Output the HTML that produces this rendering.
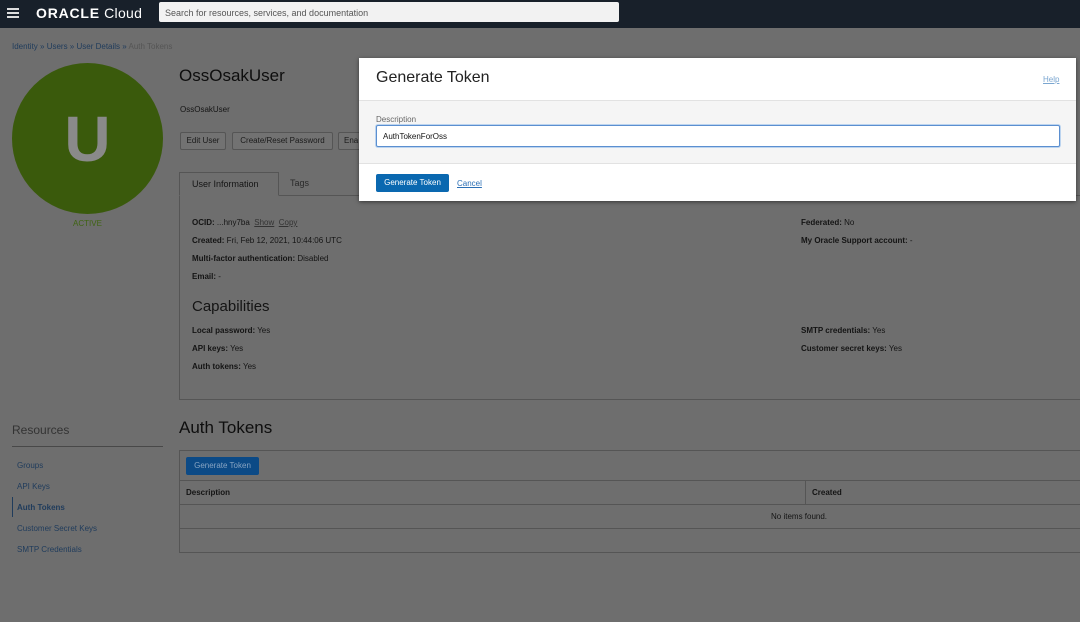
<!DOCTYPE html>
<html><head><meta charset="utf-8"><style>
*{margin:0;padding:0;box-sizing:border-box}
body{width:1080px;height:622px;background:#6e6e6e;font-family:"Liberation Sans",sans-serif;position:relative;overflow:hidden;color:#141414}
.a{position:absolute;white-space:nowrap}
.s{font-size:8px}
b{font-weight:bold}
.ln{color:#203c5c}
.btn{position:absolute;border:1px solid #555;background:#727272;font-size:8px;color:#1a1a1a;text-align:center;line-height:16px;border-radius:2px}
</style></head><body>
<div class="a" style="left:0;top:0;width:1080px;height:28px;background:#18202a"></div>
<div class="a" style="left:7px;top:8px;width:12px;height:1.5px;background:#ddd;box-shadow:0 4px 0 #ddd,0 8px 0 #ddd"></div>
<div class="a" style="left:36px;top:5px;font-size:14px;color:#fff;letter-spacing:0.3px"><b style="font-weight:bold;letter-spacing:0.8px">ORACLE</b> <span style="font-weight:normal">Cloud</span></div>
<div class="a" style="left:159px;top:2px;width:460px;height:20px;background:#f2f2f2;border-radius:2px;font-size:9px;color:#555;padding:6px 0 0 6px">Search for resources, services, and documentation</div>

<div class="a ln" style="left:12px;top:42px;font-size:8px">Identity » Users » User Details » <span style="color:#555">Auth Tokens</span></div>
<div class="a" style="left:12px;top:63px;width:151px;height:151px;border-radius:50%;background:#3a5a0c"></div>
<div class="a" style="left:12px;top:104px;width:151px;text-align:center;font-size:64px;font-weight:bold;color:#8a8a8a;line-height:70px">U</div>
<div class="a" style="left:12px;top:219px;width:151px;text-align:center;font-size:8px;color:#3f6412">ACTIVE</div>

<div class="a" style="left:179px;top:66px;font-size:17px;color:#0e0e0e">OssOsakUser</div>
<div class="a s" style="left:180px;top:105px">OssOsakUser</div>
<div class="btn" style="left:180px;top:132px;width:46px;height:18px">Edit User</div>
<div class="btn" style="left:232px;top:132px;width:101px;height:18px">Create/Reset Password</div>
<div class="btn" style="left:338px;top:132px;width:30px;height:18px;text-align:left;padding-left:5px">Ena</div>

<div class="a" style="left:179px;top:195px;width:902px;height:205px;border:1px solid #555;border-right:none"></div>
<div class="a" style="left:179px;top:172px;width:100px;height:24px;border:1px solid #555;border-bottom:1px solid #6e6e6e;font-size:9px;padding:6px 0 0 12px">User Information</div>
<div class="a" style="left:290px;top:178px;font-size:9px;color:#2a2a2a">Tags</div>
<div class="a s" style="left:192px;top:218px"><b>OCID:</b> ...hny7ba &nbsp;<u style="color:#333">Show</u> &nbsp;<u style="color:#333">Copy</u></div>
<div class="a s" style="left:192px;top:236px"><b>Created:</b> Fri, Feb 12, 2021, 10:44:06 UTC</div>
<div class="a s" style="left:192px;top:254px"><b>Multi-factor authentication:</b> Disabled</div>
<div class="a s" style="left:192px;top:272px"><b>Email:</b> -</div>
<div class="a" style="left:192px;top:298px;font-size:15px">Capabilities</div>
<div class="a s" style="left:192px;top:326px"><b>Local password:</b> Yes</div>
<div class="a s" style="left:192px;top:344px"><b>API keys:</b> Yes</div>
<div class="a s" style="left:192px;top:362px"><b>Auth tokens:</b> Yes</div>
<div class="a s" style="left:801px;top:218px"><b>Federated:</b> No</div>
<div class="a s" style="left:801px;top:236px"><b>My Oracle Support account:</b> -</div>
<div class="a s" style="left:801px;top:326px"><b>SMTP credentials:</b> Yes</div>
<div class="a s" style="left:801px;top:344px"><b>Customer secret keys:</b> Yes</div>

<div class="a" style="left:12px;top:423px;font-size:12px;color:#333">Resources</div>
<div class="a" style="left:12px;top:446px;width:151px;height:1px;background:#484848"></div>
<div class="a s ln" style="left:17px;top:461px">Groups</div>
<div class="a s ln" style="left:17px;top:482px">API Keys</div>
<div class="a" style="left:12px;top:497px;width:1px;height:20px;background:#203c5c"></div>
<div class="a s ln" style="left:17px;top:503px;font-weight:bold">Auth Tokens</div>
<div class="a s ln" style="left:17px;top:524px">Customer Secret Keys</div>
<div class="a s ln" style="left:17px;top:545px">SMTP Credentials</div>

<div class="a" style="left:179px;top:418px;font-size:17px;color:#0e0e0e">Auth Tokens</div>
<div class="a" style="left:179px;top:450px;width:902px;height:103px;border:1px solid #555;border-right:none"></div>
<div class="a" style="left:186px;top:457px;width:73px;height:18px;background:#0c4a86;border-radius:2px;font-size:8px;color:#88a4c2;text-align:center;line-height:18px">Generate Token</div>
<div class="a" style="left:180px;top:480px;width:900px;height:1px;background:#555"></div>
<div class="a" style="left:180px;top:504px;width:900px;height:1px;background:#555"></div>
<div class="a" style="left:180px;top:528px;width:900px;height:1px;background:#555"></div>
<div class="a" style="left:805px;top:481px;width:1px;height:23px;background:#555"></div>
<div class="a s" style="left:186px;top:488px;font-weight:bold">Description</div>
<div class="a s" style="left:812px;top:488px;font-weight:bold">Created</div>
<div class="a s" style="left:771px;top:512px">No items found.</div>

<div class="a" style="left:359px;top:58px;width:717px;height:143px;background:#fff;box-shadow:0 1px 4px rgba(0,0,0,.5)"></div>
<div class="a" style="left:359px;top:100px;width:717px;height:64px;background:#f5f5f5;border-top:1px solid #e2e2e2;border-bottom:1px solid #e2e2e2"></div>
<div class="a" style="left:376px;top:69px;font-size:16px;color:#222">Generate Token</div>
<div class="a s" style="left:1043px;top:75px;color:#7aa6d0;text-decoration:underline">Help</div>
<div class="a s" style="left:376px;top:115px;color:#666">Description</div>
<div class="a" style="left:376px;top:125px;width:684px;height:22px;background:#fff;border:1px solid #5b8fd0;border-radius:2px;box-shadow:0 0 0 1px #bcd4ef;font-size:8px;padding:6px 0 0 6px">AuthTokenForOss</div>
<div class="a" style="left:376px;top:174px;width:73px;height:18px;background:#0a68b0;border-radius:2px;font-size:8px;color:#fff;text-align:center;line-height:18px">Generate Token</div>
<div class="a s" style="left:457px;top:179px;color:#2b6fb5;text-decoration:underline">Cancel</div>
</body></html>
